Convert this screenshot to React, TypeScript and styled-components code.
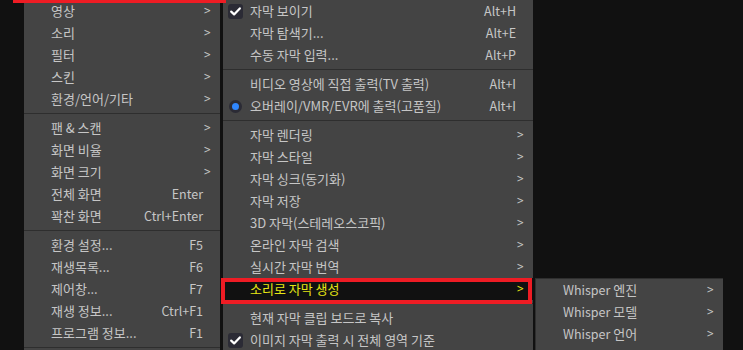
import styled, { createGlobalStyle } from 'styled-components'

const GlobalStyle = createGlobalStyle`
  html, body {
    margin: 0;
    background: #111111;
  }
  body {
    font-family: 'Noto Sans CJK KR', 'Noto Sans', sans-serif;
    font-size: 13px;
    color: #c6c6c6;
  }
`

const Screen = styled.div`
  position: relative;
  width: 743px;
  height: 350px;
  overflow: hidden;
  display: flex;
  align-items: flex-start;
`

const Menu = styled.div<{ $width: number; $gap?: number }>`
  width: ${(p) => p.$width}px;
  margin-left: ${(p) => p.$gap ?? 0}px;
  background: #444444;
  display: flex;
  flex-direction: column;
  flex-shrink: 0;
  min-height: 360px;
`

const SubMenu = styled(Menu)`
  position: absolute;
  left: 535px;
  top: 278px;
  border-top: 1px solid #2f2f2f;
  border-left: 1px solid #2f2f2f;
`

const Row = styled.div<{ $active?: boolean }>`
  display: grid;
  grid-template-columns: 27px 1fr auto;
  align-items: center;
  height: 22px;
  line-height: 22px;
  white-space: nowrap;
  background: ${(p) => (p.$active ? '#111111' : 'transparent')};
  color: ${(p) => (p.$active ? '#e6e614' : '#c6c6c6')};
`

const Label = styled.span`
  grid-column: 2;
`

const Shortcut = styled.span`
  grid-column: 3;
  margin-right: 17px;
  text-align: right;
  font-size: 12.5px;
`

const Arrow = styled.span`
  grid-column: 3;
  margin-right: 9px;
  font-family: 'DejaVu Sans', sans-serif;
  font-size: 10px;
  transform: scaleX(0.9);
`

const Latin = styled.span`
  font-size: 12.5px;
`

const Separator = styled.div`
  height: 1px;
  margin: 3px 0;
  background: #2e2e2e;
`

const IconBox = styled.span`
  grid-column: 1;
  width: 15px;
  height: 15px;
  margin-left: 5px;
  display: flex;
  align-items: center;
  justify-content: center;
`

const CheckBox = styled(IconBox)`
  background: #2b2b35;
  border-radius: 3px;
`

const RadioDot = styled(IconBox)`
  &::before {
    content: '';
    width: 13px;
    height: 13px;
    border-radius: 50%;
    background: #2b2b35;
    display: flex;
  }
  &::after {
    content: '';
    position: absolute;
    width: 7px;
    height: 7px;
    border-radius: 50%;
    background: #2f86ff;
  }
`

const Annotation = styled.div<{ $l: number; $t: number; $w: number; $h: number }>`
  position: absolute;
  left: ${(p) => p.$l}px;
  top: ${(p) => p.$t}px;
  width: ${(p) => p.$w}px;
  height: ${(p) => p.$h}px;
  border: 4px solid #ee1c24;
  box-sizing: border-box;
  pointer-events: none;
`

type Item =
  | { sep: true }
  | {
      sep?: false
      label: React.ReactNode
      key?: string
      sub?: boolean
      check?: boolean
      radio?: boolean
      active?: boolean
    }

const leftItems: Item[] = [
  { label: '영상', sub: true },
  { label: '소리', sub: true },
  { label: '필터', sub: true },
  { label: '스킨', sub: true },
  { label: '환경/언어/기타', sub: true },
  { sep: true },
  { label: '팬 & 스캔', sub: true },
  { label: '화면 비율', sub: true },
  { label: '화면 크기', sub: true },
  { label: '전체 화면', key: 'Enter' },
  { label: '꽉찬 화면', key: 'Ctrl+Enter' },
  { sep: true },
  { label: '환경 설정...', key: 'F5' },
  { label: '재생목록...', key: 'F6' },
  { label: '제어창...', key: 'F7' },
  { label: '재생 정보...', key: 'Ctrl+F1' },
  { label: '프로그램 정보...', key: 'F1' },
  { sep: true },
]

const subtitleItems: Item[] = [
  { label: '자막 보이기', key: 'Alt+H', check: true },
  { label: '자막 탐색기...', key: 'Alt+E' },
  { label: '수동 자막 입력...', key: 'Alt+P' },
  { sep: true },
  { label: '비디오 영상에 직접 출력(TV 출력)', key: 'Alt+I' },
  { label: '오버레이/VMR/EVR에 출력(고품질)', key: 'Alt+I', radio: true },
  { sep: true },
  { label: '자막 렌더링', sub: true },
  { label: '자막 스타일', sub: true },
  { label: '자막 싱크(동기화)', sub: true },
  { label: '자막 저장', sub: true },
  { label: '3D 자막(스테레오스코픽)', sub: true },
  { label: '온라인 자막 검색', sub: true },
  { label: '실시간 자막 번역', sub: true },
  { label: '소리로 자막 생성', sub: true, active: true },
  { sep: true },
  { label: '현재 자막 클립 보드로 복사' },
  { label: '이미지 자막 출력 시 전체 영역 기준', check: true },
]

const whisperItems: Item[] = [
  { label: <><Latin>Whisper</Latin> 엔진</>, sub: true },
  { label: <><Latin>Whisper</Latin> 모델</>, sub: true },
  { label: <><Latin>Whisper</Latin> 언어</>, sub: true },
]

const CheckMark = () => (
  <svg width="11" height="9" viewBox="0 0 11 9">
    <path
      d="M1.2 4.6 L4.1 7.4 L9.8 1.4"
      fill="none"
      stroke="#ffffff"
      strokeWidth="2.2"
      strokeLinecap="round"
      strokeLinejoin="round"
    />
  </svg>
)

const MenuRows: React.FC<{ items: Item[] }> = ({ items }) => (
  <>
    {items.map((item, i) => {
      if (item.sep) return <Separator key={i} />
      return (
        <Row key={i} $active={item.active}>
          {item.check && (
            <CheckBox>
              <CheckMark />
            </CheckBox>
          )}
          {item.radio && <RadioDot />}
          <Label>{item.label}</Label>
          {item.key && <Shortcut>{item.key}</Shortcut>}
          {item.sub && <Arrow>&gt;</Arrow>}
        </Row>
      )
    })}
  </>
)

export default function App() {
  return (
    <>
      <GlobalStyle />
      <Screen>
        <Menu $width={196} $gap={24}>
          <MenuRows items={leftItems} />
        </Menu>
        <Menu $width={310} $gap={3}>
          <MenuRows items={subtitleItems} />
        </Menu>
        <SubMenu $width={187}>
          <MenuRows items={whisperItems} />
        </SubMenu>
        <Annotation $l={13} $t={-25} $w={213} $h={28} />
        <Annotation $l={221} $t={278} $w={311} $h={26} />
      </Screen>
    </>
  )
}
